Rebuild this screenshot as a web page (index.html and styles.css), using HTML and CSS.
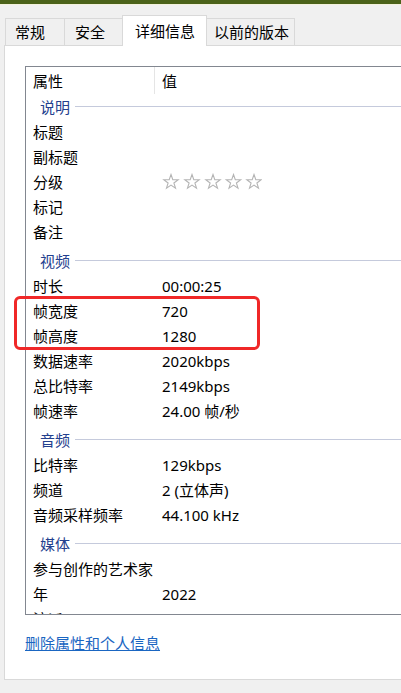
FILE: index.html
```html
<!DOCTYPE html>
<html lang="zh-CN">
<head>
    <meta charset="UTF-8">
    <meta name="viewport" content="width=device-width, initial-scale=1.0">
    <title>详细信息</title>
    <link rel="stylesheet" href="styles.css">
</head>
<body>
    <div class="titlebar"></div>

    <div class="tabs">
        <div class="tab tab-general">常规</div>
        <div class="tab tab-security">安全</div>
        <div class="tab tab-details active">详细信息</div>
        <div class="tab tab-versions">以前的版本</div>
    </div>

    <div class="panel">
        <div class="list">
            <div class="list-head">
                <span class="name">属性</span>
                <span class="value">值</span>
            </div>

            <div class="group group-first"><span>说明</span></div>
            <div class="row"><span class="name">标题</span><span class="value"></span></div>
            <div class="row"><span class="name">副标题</span><span class="value"></span></div>
            <div class="row">
                <span class="name">分级</span>
                <span class="value">
                    <svg class="stars" width="100" height="17" viewBox="0 0 100 17">
                        <defs>
                            <polygon id="star" points="7.5,0.5 9.3,5.6 14.7,5.7 10.4,9 12,14.2 7.5,11.1 3,14.2 4.6,9 0.3,5.7 5.7,5.6"/>
                        </defs>
                        <use href="#star" x="1.5" y="1"/>
                        <use href="#star" x="22.5" y="1"/>
                        <use href="#star" x="43.5" y="1"/>
                        <use href="#star" x="64" y="1"/>
                        <use href="#star" x="84.5" y="1"/>
                    </svg>
                </span>
            </div>
            <div class="row"><span class="name">标记</span><span class="value"></span></div>
            <div class="row"><span class="name">备注</span><span class="value"></span></div>

            <div class="group"><span>视频</span></div>
            <div class="row"><span class="name">时长</span><span class="value">00:00:25</span></div>
            <div class="row"><span class="name">帧宽度</span><span class="value">720</span></div>
            <div class="row"><span class="name">帧高度</span><span class="value">1280</span></div>
            <div class="row"><span class="name">数据速率</span><span class="value">2020kbps</span></div>
            <div class="row"><span class="name">总比特率</span><span class="value">2149kbps</span></div>
            <div class="row"><span class="name">帧速率</span><span class="value">24.00 帧/秒</span></div>

            <div class="group"><span>音频</span></div>
            <div class="row"><span class="name">比特率</span><span class="value">129kbps</span></div>
            <div class="row"><span class="name">频道</span><span class="value">2 (立体声)</span></div>
            <div class="row"><span class="name">音频采样频率</span><span class="value">44.100 kHz</span></div>

            <div class="group"><span>媒体</span></div>
            <div class="row"><span class="name">参与创作的艺术家</span><span class="value"></span></div>
            <div class="row"><span class="name">年</span><span class="value">2022</span></div>
            <div class="row"><span class="name">流派</span><span class="value"></span></div>
        </div>

        <a class="remove-link" href="#">删除属性和个人信息</a>
    </div>

    <!-- 标注框 -->
    <div class="highlight"></div>
</body>
</html>
```

FILE: styles.css
```css
html, body {
    margin: 0;
    padding: 0;
}
body {
    width: 401px;
    height: 693px;
    overflow: hidden;
    position: relative;
    background-color: #f0f0f0;
    font-family: "Noto Sans", "Noto Sans CJK SC", sans-serif;
    font-size: 15px;
    color: #000;
}
.titlebar {
    height: 4px;
    background-color: #4b6219;
    border-bottom: 1px solid #f3f1dc;
}
.tabs {
    display: flex;
    align-items: flex-end;
    height: 30px;
    margin-top: 10px;
    padding-left: 6px;
}
.tab {
    box-sizing: border-box;
    height: 27px;
    margin-left: -1px;
    border: 1px solid #d9d9d9;
    border-bottom: none;
    background-color: #f0f0f0;
    line-height: 27px;
    white-space: nowrap;
}
.tab-general {
    width: 60px;
    padding-left: 9px;
}
.tab-security {
    width: 59px;
    padding-left: 10px;
}
.tab-details {
    width: 85px;
    padding-left: 12px;
}
.tab-versions {
    width: 89px;
    padding-left: 7px;
}
.tab.active {
    position: relative;
    z-index: 1;
    height: 31px;
    margin-bottom: -1px;
    background-color: #fff;
    line-height: 30px;
}
.panel {
    box-sizing: border-box;
    height: 635px;
    margin-left: 4px;
    padding: 20px 0 0 20px;
    border: 1px solid #d9d9d9;
    border-right: none;
    background-color: #fff;
}
.list {
    box-sizing: border-box;
    height: 549px;
    border: 1px solid #828790;
    border-right: none;
    overflow: hidden;
}
.list-head,
.row {
    display: grid;
    grid-template-columns: 129px 1fr;
    align-items: center;
}
.list-head {
    height: 27px;
}
.list-head .name {
    align-self: stretch;
    display: flex;
    align-items: center;
    border-right: 1px solid #e5e5e5;
}
.row {
    height: 25px;
}
.name {
    padding-left: 7px;
    white-space: nowrap;
}
.value {
    padding-left: 7px;
    white-space: nowrap;
}
.stars {
    display: block;
    fill: none;
    stroke: #b4b4b4;
    stroke-width: 1.1;
}
.group {
    box-sizing: border-box;
    display: flex;
    align-items: center;
    gap: 5px;
    height: 29px;
    padding: 4px 0 0 14px;
    color: #23408e;
}
.group-first {
    height: 25px;
    padding-top: 0;
}
.group::after {
    content: "";
    flex: 1;
    height: 1px;
    background-color: #c5cadc;
}
.remove-link {
    display: inline-block;
    margin-top: 18px;
    line-height: 20px;
    color: #1a66c2;
    text-decoration: underline;
}
.highlight {
    position: absolute;
    left: 14px;
    top: 296px;
    width: 240px;
    height: 48px;
    border: 3px solid #f02828;
    border-radius: 6px;
}
```
